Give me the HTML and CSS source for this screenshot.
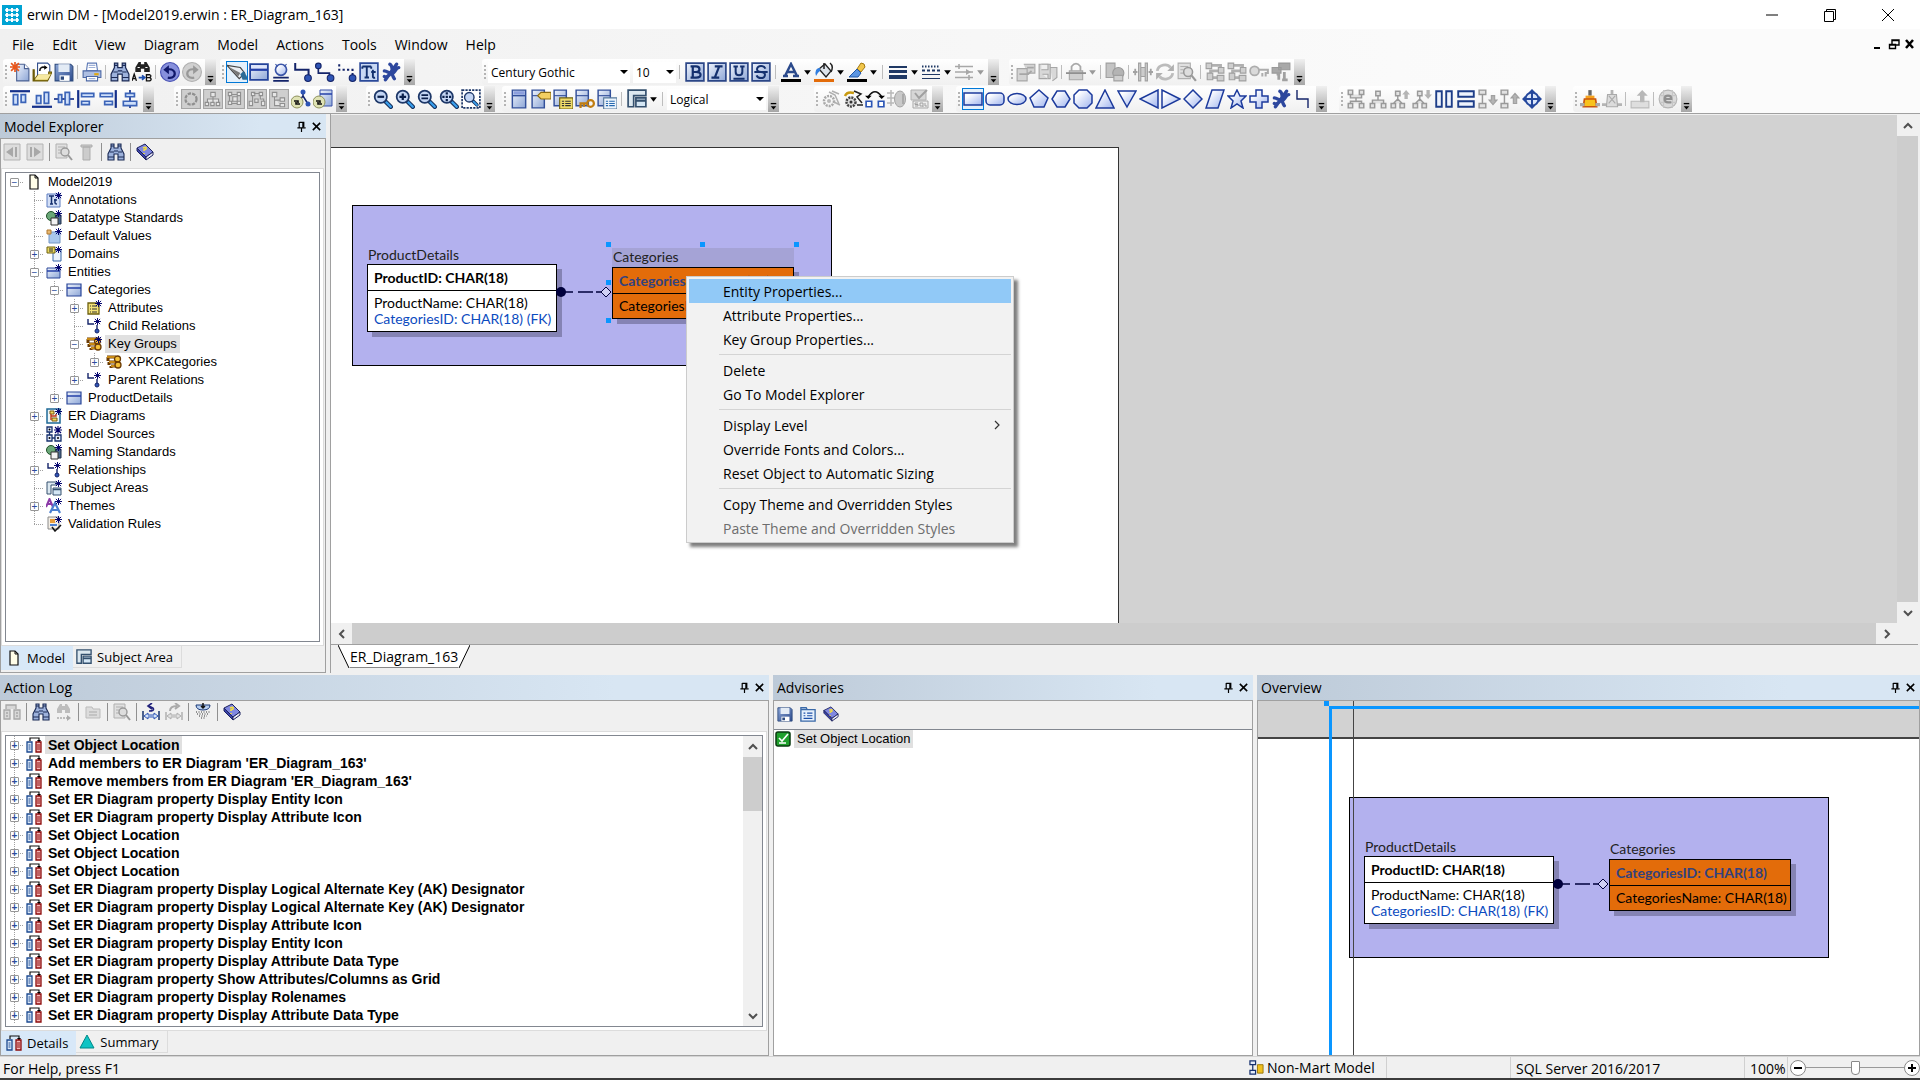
FILE: index.html
```html
<!DOCTYPE html>
<html lang="en">
<head>
    <meta charset="UTF-8">
    <meta name="viewport" content="width=device-width, initial-scale=1.0">
    <title>erwin DM - [Model2019.erwin : ER_Diagram_163]</title>
    <link rel="stylesheet" href="styles.css">
</head>
<body>
<svg class="sprite" aria-hidden="true">
    <defs>
        <linearGradient id="gb" x1="0" y1="0" x2="1" y2="1"><stop offset="0.2" stop-color="#fff"/><stop offset="1" stop-color="#9fb4ee"/></linearGradient>
        <linearGradient id="gk" x1="0" y1="0" x2="1" y2="1"><stop offset="0" stop-color="#8ea8d8"/><stop offset="1" stop-color="#2b4a8c"/></linearGradient>
        <linearGradient id="gt" x1="0" y1="0" x2="1" y2="1"><stop offset="0" stop-color="#eef3fc"/><stop offset="1" stop-color="#8da6d6"/></linearGradient>
    </defs>
    <!-- shared pieces -->
    <symbol id="spark" viewBox="0 0 8 8"><path d="M4 0v8M0 4h8M1 1l6 6M7 1L1 7" stroke="#00006b" stroke-width="1.1"/></symbol>
    <symbol id="table" viewBox="0 0 18 18"><path d="M1 2h16v14H1z" fill="url(#gt)" stroke="#24439a" stroke-width="1.6"/><path d="M2 3h14v3H2z" fill="#dfe6fb"/><path d="M1 7h16" stroke="#2440a8" stroke-width="2"/></symbol>
    <symbol id="binoc" viewBox="0 0 18 18"><path d="M4 1h3v4h4V1h3v4l3 6v6h-6v-6H7v6H1v-6l3-6z" fill="#9db2dc" stroke="#1b2a55" stroke-width="1.1"/><path d="M4 3h3M11 3h3M3 9h4M11 9h4M7 8h4M1 14h6M11 14h6" stroke="#1b2a55"/></symbol>
    <symbol id="lens" viewBox="0 0 18 18"><path d="M11 11l5 5" stroke="#17335f" stroke-width="4" stroke-linecap="round"/><path d="M12 12l4 4" stroke="#3aa0ee" stroke-width="2" stroke-linecap="round"/><circle cx="7" cy="7" r="5.5" fill="#c4d6f4" stroke="#1d3768" stroke-width="1.6"/></symbol>
    <symbol id="down" viewBox="0 0 8 8"><path d="M1 2h6L4 6z"/></symbol>
    <symbol id="more" viewBox="0 0 12 26"><path d="M3 18h6" stroke="#000" stroke-width="1.4"/><path d="M3 21h6l-3 3.500z"/></symbol>
    <symbol id="pin" viewBox="0 0 12 12"><path d="M3.500 1.500h5v5M3.500 1v6M7.500 1v6M1.500 7.500h9M6 8v4" fill="none" stroke="#000" stroke-width="1.3"/></symbol>
    <symbol id="close" viewBox="0 0 12 12"><path d="M2 2l8 8M10 2l-8 8" stroke="#000" stroke-width="1.7"/></symbol>

    <!-- file and edit -->
    <symbol id="new" viewBox="0 0 18 18"><path d="M6 2h7l4 4v11H6z" fill="url(#gt)" stroke="#4b6193"/><path d="M13 2v4h4" fill="#fff" stroke="#4b6193"/><path d="M4.500 0v9M0 4.500h9M1 1l7 7M8 1L1 8" stroke="#e8571c" stroke-width="1.5"/></symbol>
    <symbol id="open" viewBox="0 0 18 18"><path d="M5 1h9l2 2v9H5z" fill="#fff" stroke="#33508e"/><path d="M7 8c0-3 2-4 5-3" fill="none" stroke="#111" stroke-width="1.4"/><path d="M11 3l3 2-3 2z"/><path d="M1 7v10h13l4-8h-3v3H5l-3 4V7z" fill="#b39a1e" stroke="#6b5a08"/><path d="M3 15l3-4h11l-3 5H3z" fill="#f6e8a0"/></symbol>
    <symbol id="save" viewBox="0 0 18 18"><path d="M1 2h14l2 2v13H1z" fill="url(#gk)" stroke="#2d4a7d"/><path d="M4 2h10v7H4z" fill="#e3ebf5"/><path d="M5 12h9v5H5z" fill="#fff"/><path d="M6 13h3v3H6z" fill="#2d4a7d"/></symbol>
    <symbol id="print" viewBox="0 0 18 18"><path d="M5 1h8l1 7H4z" fill="#fff" stroke="#5d79b5"/><path d="M1 8h16v6H1z" fill="#aebfe2" stroke="#4d69a6"/><path d="M4 13h10v4H4z" fill="#fff" stroke="#4d69a6"/><path d="M11 11h4" stroke="#e0a813" stroke-width="2"/><path d="M6 3h6M6 5h6M6 15h6" stroke="#9fb1d8"/></symbol>
    <symbol id="replace" viewBox="0 0 18 18"><path d="M6 0h2v2h3V0h2l3 5v4h-5V6H8v3H3V5z" fill="#222"/><path d="M5 5h2M12 5h2" stroke="#fff"/><path d="M0 17l2-6 2 6M1 15h2M13 11.500h3q2 1 0 2.500h-3h3q2.500 1.500 0 3h-3z" fill="none" stroke="#111" stroke-width="1.2"/><path d="M6 14h5M9 12l2.500 2L9 16" fill="none" stroke="#1c4fb0" stroke-width="1.500"/></symbol>
    <symbol id="undo" viewBox="0 0 18 18"><circle cx="9" cy="9" r="8.500" fill="#8790dc" stroke="#4a53b4"/><path d="M7 14c5 1 7-2 6-5-1-2-4-3-7-2" fill="none" stroke="#10186a" stroke-width="2"/><path d="M3 7l5-4v8z" fill="#10186a"/></symbol>
    <symbol id="redo" viewBox="0 0 18 18"><circle cx="9" cy="9" r="8.500" fill="#d0d0d0" stroke="#b0b0b0"/><path d="M11 14c-5 1-7-2-6-5 1-2 4-3 7-2" fill="none" stroke="#989898" stroke-width="2"/><path d="M15 7l-5-4v8z" fill="#989898"/></symbol>

    <!-- drawing toolbox -->
    <symbol id="pointer" viewBox="0 0 18 18"><path d="M0 3l12 2 4 5-5 5z" fill="#e9edf2" stroke="#444"/><path d="M1 4l9 9 2-3z" fill="#777"/><path d="M12 11l3-3 3 5v3h-4z" fill="#2d6c97"/></symbol>
    <symbol id="subtype" viewBox="0 0 18 18"><circle cx="9" cy="7" r="5" fill="url(#gb)" stroke="#3a55a8" stroke-width="1.500"/><path d="M4 2l2 2M14 2l-2 2" stroke="#3a55a8"/><path d="M2 14h14M2 17h14" stroke="#14246a" stroke-width="1.600"/></symbol>
    <symbol id="rel" viewBox="0 0 18 18"><path d="M2 1v6h12v6" fill="none" stroke="#14246a" stroke-width="1.800"/><circle cx="13.500" cy="14.500" r="3" fill="#2f55b5" stroke="#14246a"/></symbol>
    <symbol id="relmany" viewBox="0 0 18 18"><path d="M3 4v6h10v4" fill="none" stroke="#14246a" stroke-width="1.500"/><circle cx="3" cy="3.500" r="2.500" fill="#2f55b5" stroke="#14246a"/><circle cx="14" cy="14.500" r="3" fill="#2f55b5" stroke="#14246a"/></symbol>
    <symbol id="reldash" viewBox="0 0 18 18"><path d="M2 2v5h12v6" fill="none" stroke="#14246a" stroke-width="1.800" stroke-dasharray="2 2"/><circle cx="14" cy="14.500" r="3" fill="#2f55b5" stroke="#14246a"/></symbol>
    <symbol id="textbox" viewBox="0 0 18 18"><path d="M1 1h16v16H1z" fill="#c8d8f4" stroke="#2b4a9a" stroke-width="1.500"/><path d="M3 4h8M7 4v10M5 14h4M3 4v2M11 4v2M12.500 7v6q0 1.500 2 1M11 9h4" fill="none" stroke="#12306e" stroke-width="1.700"/></symbol>
    <symbol id="brace" viewBox="0 0 18 18"><path d="M3 13c4 2 4-3 7-3s3-5 6-5M3 8c3 0 4 3 7 2M8 2c4 2 0 8 4 13M4 16L14 2" fill="none" stroke="#2d479e" stroke-width="3" stroke-linecap="round"/></symbol>

    <!-- font and line styles -->
    <symbol id="fb" viewBox="0 0 18 18"><path d="M1 1h16v16H1z" fill="url(#gt)" stroke="#2b4687" stroke-width="1.500"/><path d="M5 4h5q3 0 3 2.500T10 9q4 0 4 2.500T10 14H5M7 4v10M7 9h3" fill="none" stroke="#14306e" stroke-width="2"/></symbol>
    <symbol id="fi" viewBox="0 0 18 18"><path d="M1 1h16v16H1z" fill="url(#gt)" stroke="#2b4687" stroke-width="1.500"/><path d="M7 4h7M4 14h7M11 4L7 14" stroke="#14306e" stroke-width="2"/></symbol>
    <symbol id="fu" viewBox="0 0 18 18"><path d="M1 1h16v16H1z" fill="url(#gt)" stroke="#2b4687" stroke-width="1.500"/><path d="M4 4h4M10 4h4M6 4v5q0 3 3 3t3-3V4M4 15h10" fill="none" stroke="#14306e" stroke-width="1.800"/></symbol>
    <symbol id="fs" viewBox="0 0 18 18"><path d="M1 1h16v16H1z" fill="url(#gt)" stroke="#2b4687" stroke-width="1.500"/><path d="M13 6q-1-2.500-4-2.500T5.500 6 9 9t3.500 3T9 14.500 5 12M3 9h12" fill="none" stroke="#14306e" stroke-width="1.800"/></symbol>
    <symbol id="fcolor" viewBox="0 0 20 20"><path d="M4 14L10 2l6 12M6 10h8M2 14h5M12 14h6" fill="none" stroke="#2b4a8c" stroke-width="2.500"/><path d="M0 17h20v3H0z"/></symbol>
    <symbol id="fill" viewBox="0 0 20 20"><path d="M5 7l6-5 6 7-5 6z" fill="#dde3ea" stroke="#222" stroke-width="1.300"/><path d="M10 1v6M16 1q4 3 1 9" fill="none" stroke="#222" stroke-width="1.500"/><path d="M6 6q-6 0-4 8 2-4 4-5z" fill="#2f7de0"/><path d="M0 17h20v3H0z" fill="#e36c0a"/></symbol>
    <symbol id="brush" viewBox="0 0 20 20"><path d="M14 1q4 0 4 4l-4 5-4-3z" fill="#f1c64b" stroke="#a47a12"/><path d="M10 7l4 4-3 4H2l5-5z" fill="#5b95e2" stroke="#1f56a8"/><path d="M0 17h20v3H0z"/></symbol>
    <symbol id="weight" viewBox="0 0 20 20"><path d="M1 5h18" stroke="#1f3864" stroke-width="2"/><path d="M1 9.500h18" stroke="#1f3864" stroke-width="3"/><path d="M1 15h18" stroke="#1f3864" stroke-width="4"/></symbol>
    <symbol id="dash" viewBox="0 0 20 20"><path d="M1 4.500h18" stroke="#1f3864" stroke-width="2" stroke-dasharray="1.500 1.500"/><path d="M1 8.500h18" stroke="#1f3864" stroke-width="2" stroke-dasharray="3 2"/><path d="M1 12.500h18M1 16.500h18" stroke="#1f3864"/></symbol>
    <symbol id="arrows" viewBox="0 0 20 20"><path d="M1 4.500h18M1 10h18M1 15.500h18M5 2v5M15 13v5" stroke="#a8a8a8" stroke-width="1.600"/><path d="M12 7l5 3-5 3z" fill="#a8a8a8"/></symbol>

    <!-- disabled tools -->
    <symbol id="d-folder" viewBox="0 0 18 18"><path d="M1 6h9v11H1zM7 2h10v8H10" fill="#d4d4d4" stroke="#a6a6a6"/><path d="M10 5h6M3 11h8l3-3" fill="none" stroke="#a6a6a6" stroke-width="1.600"/></symbol>
    <symbol id="d-save" viewBox="0 0 18 18"><path d="M1 2h10v13H1zM11 5h6v9l-4 3" fill="#d8d8d8" stroke="#a6a6a6"/><path d="M3 2h6v5H3M4 11h5v4" fill="#f0f0f0" stroke="#a6a6a6"/></symbol>
    <symbol id="d-lock" viewBox="0 0 18 18"><path d="M5 8V4q4-5 8 0v4" fill="none" stroke="#a8a8a8" stroke-width="1.600"/><path d="M3 8h12v8H3z" fill="#cfcfcf" stroke="#a8a8a8"/><path d="M0 10h18" stroke="#909090" stroke-width="1.600"/></symbol>
    <symbol id="d-cube" viewBox="0 0 18 18"><path d="M1 1h8v13H1z" fill="#c4c4c4" stroke="#a0a0a0"/><circle cx="12" cy="10" r="5" fill="#b4b4b4" stroke="#999"/><path d="M8 12h8v5H8z" fill="#cfcfcf" stroke="#a0a0a0"/></symbol>
    <symbol id="d-width" viewBox="0 0 18 18"><path d="M5 1h2v16H5zM11 1h2v16h-2zM7 5h4v8H7z" fill="#ccc" stroke="#a2a2a2"/><path d="M0 9h4M14 9h4M2 6v6M16 6v6" stroke="#a2a2a2" stroke-width="1.600"/></symbol>
    <symbol id="d-sync" viewBox="0 0 18 18"><path d="M2 8c1-6 9-7 12-3M16 10c-1 6-9 7-12 3" fill="none" stroke="#bcbcbc" stroke-width="2.500"/><path d="M17 2v6h-6zM1 16v-6h6z" fill="#b0b0b0"/></symbol>
    <symbol id="d-find" viewBox="0 0 18 18"><path d="M1 1h11v14H1z" fill="#e0e0e0" stroke="#b0b0b0"/><path d="M3 4h7M3 7h3M3 10h3" stroke="#b0b0b0"/><circle cx="10" cy="9" r="4" fill="#ddd" stroke="#999" stroke-width="1.400"/><path d="M13 12l4 5" stroke="#999" stroke-width="2"/></symbol>
    <symbol id="d-flow" viewBox="0 0 18 18"><path d="M3 3h11v5H5v6h9" fill="none" stroke="#b0b0b0" stroke-width="2.500"/><path d="M1 1h5v5H1zM12 5h5v5h-5zM2 10h5v6H2zM11 12h6v5h-6z" fill="#cfcfcf" stroke="#a0a0a0"/></symbol>
    <symbol id="d-key" viewBox="0 0 18 18"><circle cx="5" cy="8" r="4" fill="#dadada" stroke="#adadad" stroke-width="1.600"/><path d="M9 7h8v3h-2v3M12 10v3" fill="none" stroke="#adadad" stroke-width="1.800"/></symbol>
    <symbol id="d-swap" viewBox="0 0 18 18"><path d="M7 1h10v6H7zM1 5h8v5H1z" fill="#a8a8a8" stroke="#989898"/><path d="M5 11h2v5M12 9v6M10 16h5" stroke="#a0a0a0" stroke-width="2.500" fill="none"/></symbol>
    <symbol id="d-gear" viewBox="0 0 20 20"><circle cx="8" cy="12" r="5" fill="none" stroke="#a8a8a8" stroke-width="2.500" stroke-dasharray="2 1"/><circle cx="8" cy="12" r="2" fill="#b8b8b8"/><path d="M8 3l6 3 4 9M11 2l7 3M13 13l6 3" fill="none" stroke="#b0b0b0" stroke-width="1.500"/></symbol>
    <symbol id="gear" viewBox="0 0 20 20"><circle cx="8" cy="13" r="4.500" fill="#ddd" stroke="#444" stroke-width="2.500" stroke-dasharray="2 1"/><circle cx="8" cy="13" r="1.500" fill="#333"/><path d="M2 7q2-5 9-3" fill="none" stroke="#c89a10" stroke-width="2.500"/><path d="M11 2l7 3-4 3 5 6M14 16h6" fill="none" stroke="#222" stroke-width="1.500"/></symbol>
    <symbol id="swap" viewBox="0 0 18 18"><path d="M3 7q6-9 12 0" fill="none" stroke="#111" stroke-width="1.500"/><path d="M0 6h6l-3 3zM12 6h6l-3 3z"/><path d="M1 11h5v5H1zM12 11h5v5h-5z" fill="#fff" stroke="#2b55b5" stroke-width="1.500"/></symbol>
    <symbol id="d-db" viewBox="0 0 20 20"><path d="M0 4h7M0 9h8M0 14h7M4 1v16" stroke="#b8b8b8" stroke-width="1.500"/><ellipse cx="13" cy="10" rx="5.500" ry="8" fill="#c9c9c9" stroke="#a4a4a4"/><path d="M16 5v10" stroke="#aaa" stroke-width="2"/></symbol>
    <symbol id="d-sql" viewBox="0 0 20 20"><path d="M2 1h15v10H2z" fill="#d6d6d6" stroke="#b0b0b0"/><path d="M6 4l4 5 8-8" fill="none" stroke="#a0a0a0" stroke-width="2"/><path d="M4 12h15v7H4z" fill="#eee" stroke="#a8a8a8"/><path d="M9 14H6v1.500h3V17H6M14 17h-3v-3h3v4M16 14v3h2" fill="none" stroke="#a0a0a0"/></symbol>

    <!-- alignment -->
    <symbol id="a-top" viewBox="0 0 18 18"><path d="M0 2h18" stroke="#15308a" stroke-width="2"/><path d="M3 5h4v9H3zM10 5h4v7h-4z" fill="#cfe0fb" stroke="#3c64b8" stroke-width="1.500"/></symbol>
    <symbol id="a-bot" viewBox="0 0 18 18"><path d="M0 16h18" stroke="#15308a" stroke-width="2"/><path d="M4 6h4v7H4zM11 3h4v10h-4z" fill="#cfe0fb" stroke="#3c64b8" stroke-width="1.500"/></symbol>
    <symbol id="a-mid" viewBox="0 0 18 18"><path d="M0 9h18" stroke="#15308a" stroke-width="1.500"/><path d="M4 5h3v7H4zM10 3h4v11h-4z" fill="#cfe0fb" stroke="#3c64b8" stroke-width="1.500"/></symbol>
    <symbol id="a-left" viewBox="0 0 18 18"><path d="M2 1v16" stroke="#15308a" stroke-width="2"/><path d="M5 4h11v3H5zM5 11h7v3H5z" fill="#cfe0fb" stroke="#3c64b8" stroke-width="1.500"/></symbol>
    <symbol id="a-right" viewBox="0 0 18 18"><path d="M16 1v16" stroke="#15308a" stroke-width="2"/><path d="M2 4h11v3H2zM6 11h7v3H6z" fill="#cfe0fb" stroke="#3c64b8" stroke-width="1.500"/></symbol>
    <symbol id="a-center" viewBox="0 0 18 18"><path d="M9 1v16" stroke="#15308a" stroke-width="1.500"/><path d="M5 4h8v3H5zM3 11h12v4H3z" fill="#cfe0fb" stroke="#3c64b8" stroke-width="1.500"/></symbol>

    <!-- layouts -->
    <symbol id="l-circle" viewBox="0 0 18 18"><path d="M0 0h18v18H0z" fill="#cfcfcf" stroke="#a5a5a5" stroke-width="2"/><circle cx="9" cy="9" r="5" fill="none" stroke="#8f8f8f" stroke-width="2" stroke-dasharray="3 1"/></symbol>
    <symbol id="l-tree" viewBox="0 0 18 18"><path d="M0 0h18v18H0z" fill="#cfcfcf" stroke="#a5a5a5" stroke-width="2"/><path d="M7 3h4v4H7zM9 7v5M4 12V9h10v3M2 12h3v3H2zM7 12h3v3H7zM12 12h3v3h-3z" fill="#e6e6e6" stroke="#8f8f8f"/></symbol>
    <symbol id="l-grid" viewBox="0 0 18 18"><path d="M0 0h18v18H0z" fill="#cfcfcf" stroke="#a5a5a5" stroke-width="2"/><path d="M3 3h3v3H3zM11 3h3v3h-3zM3 11h3v3H3zM11 11h3v3h-3zM7 7h4v4H7zM6 5h5M4 6v5M14 6v5M6 13h5" fill="#e6e6e6" stroke="#8f8f8f"/></symbol>
    <symbol id="l-org" viewBox="0 0 18 18"><path d="M0 0h18v18H0z" fill="#cfcfcf" stroke="#a5a5a5" stroke-width="2"/><path d="M4 3h3v3H4zM11 3h3v3h-3zM2 11h3v4H2zM7 9h3v3H7zM13 11h3v4h-3zM5 6v5M12 6v3h3v2M6 4h5" fill="#e6e6e6" stroke="#8f8f8f"/></symbol>
    <symbol id="l-list" viewBox="0 0 18 18"><path d="M0 0h18v18H0z" fill="#cfcfcf" stroke="#a5a5a5" stroke-width="2"/><path d="M3 3h4v4H3zM5 7v8h5M5 10h5M10 8h4v3h-4zM10 13h4v3h-4z" fill="#e6e6e6" stroke="#8f8f8f"/></symbol>
    <symbol id="redraw" viewBox="0 0 20 20"><path d="M12 3v4l5 8M12 7l-4 5" fill="none" stroke="#14246a" stroke-width="1.500"/><circle cx="12" cy="3" r="2.500" fill="#2f55b5"/><circle cx="17" cy="15" r="2.500" fill="#2f55b5"/><circle cx="6" cy="13" r="6" fill="#dfe2b4" stroke="#8e915c"/><path d="M3 12h4v2M9 15H5v-2" fill="none" stroke="#111" stroke-width="1.600"/></symbol>
    <symbol id="redraw2" viewBox="0 0 20 20"><path d="M7 1h12v16H7z" fill="url(#gt)" stroke="#3850a8"/><path d="M7 5h12" stroke="#2440a8" stroke-width="1.500"/><circle cx="6" cy="13" r="6" fill="#dfe2b4" stroke="#8e915c"/><path d="M3 12h4v2M9 15H5v-2" fill="none" stroke="#111" stroke-width="1.600"/></symbol>

    <!-- zoom -->
    <symbol id="z-out" viewBox="0 0 18 18"><use href="#lens"/><path d="M4 7h6" stroke="#0a1f4a" stroke-width="2"/></symbol>
    <symbol id="z-in" viewBox="0 0 18 18"><use href="#lens"/><path d="M4 7h6M7 4v6" stroke="#0a1f4a" stroke-width="2"/></symbol>
    <symbol id="z-norm" viewBox="0 0 18 18"><use href="#lens"/><path d="M4 5.500h6M4 8.500h6" stroke="#0a1f4a" stroke-width="1.500"/></symbol>
    <symbol id="z-fit" viewBox="0 0 18 18"><use href="#lens"/><path d="M3 7h8M7 3v8" stroke="#0a1f4a" stroke-width="2" stroke-dasharray="2 1"/></symbol>
    <symbol id="z-sel" viewBox="0 0 18 18"><path d="M1 1h16v16H1z" fill="#fff" stroke="#1d3768" stroke-width="1.500" stroke-dasharray="2 1"/><use href="#lens" x="2" y="2" width="14" height="14"/></symbol>

    <!-- display levels -->
    <symbol id="v-ent" viewBox="0 0 18 18"><path d="M3 1h12v16H3z" fill="url(#gt)" stroke="#33509a" stroke-width="1.300"/><path d="M4 2h10v3H4z" fill="#8c9fdd"/><path d="M3 6h12" stroke="#33509a" stroke-width="1.300"/></symbol>
    <symbol id="v-tag" viewBox="0 0 18 18"><path d="M1 1h11v16H1z" fill="url(#gt)" stroke="#33509a" stroke-width="1.300"/><path d="M1 6h11" stroke="#33509a"/><path d="M6 6l3-3h9v6H9z" fill="#f2cf62" stroke="#8a6a10"/></symbol>
    <symbol id="v-attr" viewBox="0 0 18 18"><path d="M1 1h11v14H1z" fill="url(#gt)" stroke="#33509a" stroke-width="1.300"/><path d="M1 6h11" stroke="#33509a"/><path d="M6 8h12v10H6z" fill="#f0dc6a" stroke="#6e6010"/><path d="M8 11h2M11 11h5M8 13h2M11 13h5M8 15h2M11 15h5" stroke="#333"/></symbol>
    <symbol id="v-key" viewBox="0 0 18 18"><path d="M1 1h11v14H1z" fill="url(#gt)" stroke="#33509a" stroke-width="1.300"/><path d="M1 6h11" stroke="#33509a"/><circle cx="14" cy="13" r="3" fill="none" stroke="#c07c10" stroke-width="2"/><path d="M11 13H5v4M8 13v3" fill="none" stroke="#c07c10" stroke-width="2"/></symbol>
    <symbol id="v-def" viewBox="0 0 18 18"><path d="M1 1h11v14H1z" fill="url(#gt)" stroke="#33509a" stroke-width="1.300"/><path d="M1 6h11" stroke="#33509a"/><path d="M6 8h12v10H6z" fill="#eaf3fb" stroke="#54789c"/><path d="M8 11h2M11 11h5M8 13h2M11 13h5M8 15h2M11 15h5" stroke="#2468b0"/></symbol>
    <symbol id="area" viewBox="0 0 18 18"><path d="M1 1h16v5H6v10H1z" fill="#dce8f0" stroke="#34506e" stroke-width="1.500"/><path d="M8 8h9v8H8z" fill="#d4e6f4" stroke="#34506e" stroke-width="1.500"/><path d="M8 10.500h9" stroke="#34506e" stroke-width="2"/></symbol>

    <!-- shapes -->
    <symbol id="s-rect" viewBox="0 0 20 20"><path d="M1 4h18v12H1z" fill="url(#gb)" stroke="#1c3a9c" stroke-width="1.500"/></symbol>
    <symbol id="s-round" viewBox="0 0 20 20"><rect x="1" y="4" width="18" height="12" rx="4" fill="url(#gb)" stroke="#1c3a9c" stroke-width="1.500"/></symbol>
    <symbol id="s-oval" viewBox="0 0 20 20"><ellipse cx="10" cy="10" rx="9" ry="5.500" fill="url(#gb)" stroke="#1c3a9c" stroke-width="1.500"/></symbol>
    <symbol id="s-pent" viewBox="0 0 20 20"><path d="M10 1l9 8-4 9H5L1 9z" fill="url(#gb)" stroke="#1c3a9c" stroke-width="1.500"/></symbol>
    <symbol id="s-hex" viewBox="0 0 20 20"><path d="M6 2h8l5 8-5 8H6l-5-8z" fill="url(#gb)" stroke="#1c3a9c" stroke-width="1.500"/></symbol>
    <symbol id="s-oct" viewBox="0 0 20 20"><path d="M6 1h8l5 5v8l-5 5H6l-5-5V6z" fill="url(#gb)" stroke="#1c3a9c" stroke-width="1.500"/></symbol>
    <symbol id="s-up" viewBox="0 0 20 20"><path d="M10 1l9 18H1z" fill="url(#gb)" stroke="#1c3a9c" stroke-width="1.500"/></symbol>
    <symbol id="s-down" viewBox="0 0 20 20"><path d="M10 18l9-16H1z" fill="url(#gb)" stroke="#1c3a9c" stroke-width="1.500"/></symbol>
    <symbol id="s-left" viewBox="0 0 20 20"><path d="M1 10l18-9v18z" fill="url(#gb)" stroke="#1c3a9c" stroke-width="1.500"/></symbol>
    <symbol id="s-right" viewBox="0 0 20 20"><path d="M19 10L1 1v18z" fill="url(#gb)" stroke="#1c3a9c" stroke-width="1.500"/></symbol>
    <symbol id="s-dia" viewBox="0 0 20 20"><path d="M10 1l9 9-9 9-9-9z" fill="url(#gb)" stroke="#1c3a9c" stroke-width="1.500"/></symbol>
    <symbol id="s-para" viewBox="0 0 20 20"><path d="M7 1h12l-6 18H1z" fill="url(#gb)" stroke="#1c3a9c" stroke-width="1.500"/></symbol>
    <symbol id="s-star" viewBox="0 0 20 20"><path d="M10 1l3 6h6l-5 5 2 7-6-4-6 4 2-7-5-5h6z" fill="url(#gb)" stroke="#1c3a9c" stroke-width="1.500"/></symbol>
    <symbol id="s-plus" viewBox="0 0 20 20"><path d="M7 1h6v6h6v6h-6v6H7v-6H1V7h6z" fill="url(#gb)" stroke="#1c3a9c" stroke-width="1.500"/></symbol>
    <symbol id="s-step" viewBox="0 0 20 20"><path d="M4 1v9h11v9" fill="none" stroke="#14246a" stroke-width="1.400"/></symbol>

    <!-- hierarchy -->
    <symbol id="h-x" viewBox="0 0 18 18"><path d="M2 1h4v4H2zM12 1h4v4h-4zM2 13h4v4H2zM12 13h4v4h-4zM4 5v3h10V5M9 8v3M4 13v-2h10v2" fill="#e2e2e2" stroke="#999" stroke-width="1.300"/></symbol>
    <symbol id="h-tree" viewBox="0 0 18 18"><path d="M7 2h4v4H7zM2 13h4v4H2zM12 13h4v4h-4zM9 6v4M4 13v-3h10v3" fill="#e2e2e2" stroke="#999" stroke-width="1.300"/></symbol>
    <symbol id="h-up" viewBox="0 0 18 18"><path d="M5 2h4v4H5zM1 13h4v4H1zM9 13h4v4H9zM7 6v4M3 13l4-4 4 4" fill="#e2e2e2" stroke="#999" stroke-width="1.300"/><path d="M11 5l3.500-4L18 5h-2v4h-3V5z" fill="#b4b4b4"/></symbol>
    <symbol id="h-down" viewBox="0 0 18 18"><path d="M5 2h4v4H5zM1 13h4v4H1zM9 13h4v4H9zM7 6v4M3 13l4-4 4 4" fill="#e2e2e2" stroke="#999" stroke-width="1.300"/><path d="M11 5l3.500 4L18 5h-2V1h-3v4z" fill="#b4b4b4"/></symbol>
    <symbol id="h-cols" viewBox="0 0 18 18"><path d="M2 2h5v14H2zM11 2h5v14h-5z" fill="#eef3fd" stroke="#1d3d88" stroke-width="1.700"/></symbol>
    <symbol id="h-rows" viewBox="0 0 18 18"><path d="M2 2h14v5H2zM2 11h14v5H2z" fill="#eef3fd" stroke="#1d3d88" stroke-width="1.700"/></symbol>
    <symbol id="h-exp" viewBox="0 0 18 18"><path d="M1 1h6v4H1zM1 13h6v4H1zM4 5v8" fill="#e2e2e2" stroke="#999" stroke-width="1.300"/><path d="M10 10l3.500 4 3.500-4h-2V6h-3v4z" fill="#b4b4b4" stroke="#a0a0a0"/></symbol>
    <symbol id="h-col" viewBox="0 0 18 18"><path d="M1 1h6v4H1zM1 13h6v4H1zM4 5v8" fill="#e2e2e2" stroke="#999" stroke-width="1.300"/><path d="M10 8l3.500-4L17 8h-2v5h-3V8z" fill="#b4b4b4" stroke="#a0a0a0"/></symbol>
    <symbol id="target" viewBox="0 0 20 20"><circle cx="10" cy="10" r="6.500" fill="#dbe6fa" stroke="#24479c" stroke-width="2"/><path d="M10 1v18M1 10h18" stroke="#24479c" stroke-width="2"/><path d="M10 0l3 3H7zM10 20l3-3H7zM0 10l3-3v6zM20 10l-3-3v6z" fill="#24479c"/></symbol>
    <symbol id="mart" viewBox="0 0 18 18"><path d="M9 1v5" stroke="#666" stroke-width="3"/><path d="M5 6h8v3H5z" fill="#f6a21c"/><path d="M4 9h10l1 7H3z" fill="#f8c21c" stroke="#c8540c" stroke-width="1.500"/><path d="M0 14h4M14 14h4" stroke="#aaa" stroke-width="3"/></symbol>
    <symbol id="d-mart" viewBox="0 0 18 18"><path d="M9 1v4M0 14h18" stroke="#b4b4b4" stroke-width="2.500"/><path d="M5 5h8l1 11H4z" fill="#dcdcdc" stroke="#aaa"/><path d="M6 6l6 7M12 6l-6 7" stroke="#aaa"/></symbol>
    <symbol id="d-up" viewBox="0 0 18 18"><path d="M1 11h16v6H1z" fill="#dedede" stroke="#bbb"/><path d="M6 6l5-5 5 5h-3v6H9V6z" fill="#b8b8b8"/></symbol>
    <symbol id="d-globe" viewBox="0 0 18 18"><circle cx="9" cy="9" r="8" fill="#dadada" stroke="#b4b4b4"/><path d="M1 6h16M1 12h16M5 1v16M13 1v16" stroke="#c6c6c6"/><path d="M6 9h6q0-3-3-3T6 9t3 3h3" fill="none" stroke="#909090" stroke-width="2"/></symbol>

    <!-- panel tools -->
    <symbol id="p-prev" viewBox="0 0 18 18"><path d="M1 1h16v16H1z" fill="#ddd" stroke="#b4b4b4"/><path d="M10 4v10L3 9zM12 4h2v10h-2z" fill="#a8a8a8"/></symbol>
    <symbol id="p-next" viewBox="0 0 18 18"><path d="M1 1h16v16H1z" fill="#ddd" stroke="#b4b4b4"/><path d="M8 4v10l7-5zM4 4h2v10H4z" fill="#a8a8a8"/></symbol>
    <symbol id="p-del" viewBox="0 0 18 18"><path d="M3 2h11v2H3zM5 4h7v13H5z" fill="#ccc" stroke="#adadad"/></symbol>
    <symbol id="help" viewBox="0 0 18 18"><path d="M1 5l8-4 8 8-7 5z" fill="#8088e0" stroke="#1c2260"/><path d="M1 5v3l9 9v-3z" fill="#3a42a8" stroke="#1c2260"/><path d="M10 14l7-5v3l-7 5z" fill="#f0f0f8" stroke="#1c2260"/><path d="M7 5q4-2 3 1l-2 1v1M8 10v1" fill="none" stroke="#f6e03c" stroke-width="1.600"/></symbol>
    <symbol id="p-card" viewBox="0 0 18 18"><path d="M2 4h6l1 2h7v9H2z" fill="#dcdcdc" stroke="#bbb"/><path d="M5 9h8M5 12h8" stroke="#aaa"/></symbol>
    <symbol id="d-log" viewBox="0 0 18 18"><path d="M1 7h6v9H1zM11 7h6v9h-6zM3 6V2h10v4M3 10h2M3 13h2M13 10h2M13 13h2" fill="#d8d8d8" stroke="#a8a8a8" stroke-width="1.300"/></symbol>
    <symbol id="d-next" viewBox="0 0 18 18"><path d="M5 1h2v2h3V1h2l3 5v4h-5V7H7v3H2V6z" fill="#bdbdbd"/><path d="M2 15h12" stroke="#aaa" stroke-width="1.500" stroke-dasharray="2 1"/><path d="M12 12l4 3-4 3z" fill="#aaa"/></symbol>
    <symbol id="undo2" viewBox="0 0 18 18"><path d="M7 8q6 0 4-3L7 3M10 0L6 3l4 3" fill="none" stroke="#22227c" stroke-width="1.600"/><path d="M1 8v9M17 8v9" stroke="#16306e" stroke-width="1.500"/><path d="M2 13l4-3v2h6v-2l4 3-4 3v-2H6v2z" fill="#d4e2f8" stroke="#2f55b5"/></symbol>
    <symbol id="redo2" viewBox="0 0 18 18"><path d="M5 8q0-5 7-5M10 0l4 3-4 3" fill="none" stroke="#aaa" stroke-width="2"/><path d="M1 9v8M17 9v8" stroke="#b0b0b0" stroke-width="1.500"/><path d="M2 13l4-3v2h6v-2l4 3-4 3v-2H6v2z" fill="#e0e0e0" stroke="#b0b0b0"/></symbol>
    <symbol id="filter" viewBox="0 0 18 18"><path d="M2 2h14q0 5-7 5T2 2z" fill="#b8cff0" stroke="#1b3a78"/><path d="M9 0v5M7 3l2 2 2-2" fill="none" stroke="#111" stroke-width="1.500"/><path d="M2 9h14M3 11h12M5 13h8M7 15h4" stroke="#333" stroke-dasharray="1 1.500"/></symbol>
    <symbol id="details" viewBox="0 0 18 18"><path d="M1 4h16v13H1V2h6l1 2" fill="#e6f0fc" stroke="#3a69a8" stroke-width="1.500"/><path d="M4 8h2M8 8h6M4 11h2M8 11h6M4 14h10" stroke="#1d4fa8" stroke-width="1.300"/></symbol>

    <!-- tree items -->
    <symbol id="t-doc" viewBox="0 0 16 16"><path d="M4 1h5l3 3v11H4z" fill="#fffde8" stroke="#111" stroke-width="1.200"/><path d="M9 1v3h3" fill="none" stroke="#111"/></symbol>
    <symbol id="t-text" viewBox="0 0 16 16"><path d="M1 2h13v13H1z" fill="#d3dff6" stroke="#5c7cc0"/><path d="M3 4h5M5.500 4v8M4 12h3M9 7v4q0 1 2 1M8 8h3" fill="none" stroke="#16306e" stroke-width="1.500"/><use href="#spark" x="9" y="0" width="7" height="7"/></symbol>
    <symbol id="t-std" viewBox="0 0 16 16"><circle cx="5" cy="6" r="4.500" fill="#6aa878" stroke="#1f4f28"/><path d="M10 5h5v9h-5z" fill="#4d6a8e" stroke="#1f2f48"/><path d="M5 8h7v7H5z" fill="#f3f3f3" stroke="#333"/><use href="#spark" x="9" y="0" width="7" height="7"/></symbol>
    <symbol id="t-def" viewBox="0 0 16 16"><path d="M3 4h11v11H3z" fill="#a9c6ec" stroke="#7396c4"/><path d="M1 2h4v4H1z" fill="#e8b870" stroke="#b07830"/><use href="#spark" x="9" y="0" width="7" height="7"/></symbol>
    <symbol id="t-dom" viewBox="0 0 16 16"><path d="M7 4h8v11H7z" fill="#eaf2fb" stroke="#3a69a8"/><path d="M1 1h8v6H1z" fill="#e8d860" stroke="#6e6010"/><path d="M3 3h4M3 5h4" stroke="#333"/><use href="#spark" x="9" y="0" width="7" height="7"/></symbol>
    <symbol id="t-ents" viewBox="0 0 16 16"><path d="M1 4h13v10H1z" fill="url(#gt)" stroke="#2a4698"/><path d="M1 7h13" stroke="#2440a8" stroke-width="1.500"/><use href="#spark" x="9" y="0" width="7" height="7"/></symbol>
    <symbol id="t-ent" viewBox="0 0 16 16"><path d="M1 2h14v12H1z" fill="url(#gt)" stroke="#2a4698" stroke-width="1.200"/><path d="M1 6h14" stroke="#2440a8" stroke-width="1.500"/></symbol>
    <symbol id="t-attr" viewBox="0 0 16 16"><path d="M2 3h11v11H2z" fill="#f3e27a" stroke="#6e6010" stroke-width="1.300"/><path d="M4 6h1M6 6h5M4 9h1M6 9h5M4 12h1M6 12h5" stroke="#333"/><use href="#spark" x="9" y="0" width="7" height="7"/></symbol>
    <symbol id="t-rel" viewBox="0 0 16 16"><path d="M2 1v5h6M11 7v5" fill="none" stroke="#14246a" stroke-width="1.400"/><circle cx="11" cy="13" r="2" fill="#2f55b5" stroke="#14246a"/><use href="#spark" x="8" y="0" width="7" height="7"/></symbol>
    <symbol id="t-key" viewBox="0 0 16 16"><path d="M1 3h9M2 3v4M3 8h7M5 12h7M5 12v2M3 8v3" fill="none" stroke="#6b3b04" stroke-width="3"/><path d="M1 3h9M3 8h7M5 12h7" stroke="#e8a418" stroke-width="1.300"/><circle cx="11.500" cy="5" r="3" fill="#f4c038" stroke="#6b3b04" stroke-width="1.300"/><circle cx="12" cy="11" r="3" fill="#f4c038" stroke="#6b3b04" stroke-width="1.300"/></symbol>
    <symbol id="t-keys" viewBox="0 0 16 16"><use href="#t-key"/><use href="#spark" x="9" y="0" width="7" height="7"/></symbol>
    <symbol id="t-er" viewBox="0 0 16 16"><path d="M1 1h13v14H1z" fill="#eef6f8" stroke="#1f6a96" stroke-width="1.500"/><path d="M4 3h4v3H4zM6 10h5v3H6z" fill="#f0d860" stroke="#7a5a10"/><path d="M5 6v6M5 8h5v-2" fill="none" stroke="#c03818" stroke-width="1.400"/><use href="#spark" x="9" y="0" width="7" height="7"/></symbol>
    <symbol id="t-src" viewBox="0 0 16 16"><path d="M1 1h5v5H1zM1 9h5v6H1zM9 9h6v6H9zM3.500 6v3M6 12h3" fill="#e4ecfa" stroke="#16306e" stroke-width="1.300"/><circle cx="3.500" cy="3.500" r="1"/><circle cx="3.500" cy="12" r="1"/><circle cx="12" cy="12" r="1"/><use href="#spark" x="8" y="0" width="8" height="8"/></symbol>
    <symbol id="t-area" viewBox="0 0 16 16"><path d="M1 2h10v3H5v9H1z" fill="#dce8f0" stroke="#34506e"/><path d="M7 8h8v7H7z" fill="#d4e6f4" stroke="#34506e"/><path d="M7 9.500h8" stroke="#34506e" stroke-width="1.500"/><use href="#spark" x="9" y="0" width="7" height="7"/></symbol>
    <symbol id="t-theme" viewBox="0 0 16 16"><path d="M0 9L3.500 1 7 9M1 6h5" fill="none" stroke="#8c3aa8" stroke-width="2"/><path d="M4 15l5-10 5 10M6 12h7" fill="none" stroke="#4c80d0" stroke-width="2.200"/><use href="#spark" x="9" y="0" width="7" height="7"/></symbol>
    <symbol id="t-val" viewBox="0 0 16 16"><path d="M2 1h11v12H2z" fill="#f4efe6" stroke="#8a8a8a"/><path d="M4 3h5v4H4z" fill="#e89c38"/><path d="M4 9h7" stroke="#4c80d0" stroke-width="2"/><path d="M6 11l3 4 6-6" fill="none" stroke="#111" stroke-width="1.500"/><use href="#spark" x="9" y="0" width="7" height="7"/></symbol>
    <symbol id="t-log" viewBox="0 0 16 16"><path d="M4 4V1h9v3" fill="none" stroke="#111" stroke-width="1.200"/><path d="M11 3h4l-2 3z"/><path d="M1 5h5v10H1z" fill="#dbe9fa" stroke="#1c4a90" stroke-width="1.300"/><path d="M10 5h5v10h-5z" fill="#f6b8b8" stroke="#8c0c0c" stroke-width="1.300"/><path d="M2.500 8h2M2.500 10h2M2.500 12h2" stroke="#1c4a90"/><path d="M11 8h3M11 10h3M11 12h3" stroke="#8c0c0c"/></symbol>
    <symbol id="t-ok" viewBox="0 0 16 16"><rect x="1" y="1" width="14" height="14" rx="2" fill="#1fa02c" stroke="#0a3a10" stroke-width="1.500"/><path d="M4 7l3 3 6-7M4 12h7" fill="none" stroke="#fff" stroke-width="1.600"/></symbol>
    <symbol id="t-sum" viewBox="0 0 16 16"><path d="M8 1l7 13H1z" fill="#10c4c4" stroke="#088"/></symbol>
    <symbol id="nomart" viewBox="0 0 16 16"><path d="M1 1h6v4H1zM1 11h6v4H1zM4 5v6" fill="#e4ecfa" stroke="#16306e" stroke-width="1.300"/><path d="M9 5h6v9H9z" fill="#f0c020" stroke="#9a7608"/></symbol>
</svg>

<header class="title-bar">
    <svg class="logo" viewBox="0 0 20 20"><path d="M0 0h20v20H0z" fill="#00a3d3"/><path d="M3 5h14M3 10h14M3 15h14" stroke="#fff" stroke-width="1.500"/><path d="M5 3v4M10 3v4M15 3v4M5 8v4M10 8v4M15 8v4M5 13v4M10 13v4M15 13v4" stroke="#fff" stroke-width="2"/></svg>
    <h1>erwin DM - [Model2019.erwin : ER_Diagram_163]</h1>
    <div class="window-buttons">
        <button aria-label="Minimize"><svg viewBox="0 0 14 14"><path d="M1 7h12" stroke="#000"/></svg></button>
        <button aria-label="Restore"><svg viewBox="0 0 14 14"><path d="M1.500 3.500h9v10h-9zM3.500 3.500v-2h9v10h-2" fill="none" stroke="#000"/></svg></button>
        <button aria-label="Close"><svg viewBox="0 0 14 14"><path d="M1 1l12 12M13 1L1 13" stroke="#000"/></svg></button>
    </div>
</header>

<nav class="menu-bar">
    <button>File</button><button>Edit</button><button>View</button><button>Diagram</button><button>Model</button><button>Actions</button><button>Tools</button><button>Window</button><button>Help</button>
    <div class="child-buttons">
        <button aria-label="Minimize document"><svg viewBox="0 0 12 12"><path d="M2 10h6" stroke="#000" stroke-width="2"/></svg></button>
        <button aria-label="Restore document"><svg viewBox="0 0 12 12"><path d="M1.500 6.500h6v4h-6zM4 6V2h7v5H8M4 2.500h7M2 7h6" fill="none" stroke="#000" stroke-width="1.400"/></svg></button>
        <button aria-label="Close document"><svg viewBox="0 0 12 12"><path d="M2 2l7 8M9 2l-7 8" stroke="#000" stroke-width="2.500"/></svg></button>
    </div>
</nav>

<div class="toolbars">
    <div class="toolbar-row">
        <div class="toolbar tb-standard">
            <button aria-label="New"><svg><use href="#new"/></svg></button>
            <button aria-label="Open"><svg><use href="#open"/></svg></button>
            <button aria-label="Save"><svg><use href="#save"/></svg></button>
            <i class="sep"></i>
            <button aria-label="Print"><svg><use href="#print"/></svg></button>
            <i class="sep"></i>
            <button aria-label="Find"><svg><use href="#binoc"/></svg></button>
            <button aria-label="Replace"><svg><use href="#replace"/></svg></button>
            <i class="sep"></i>
            <button aria-label="Undo"><svg><use href="#undo"/></svg></button>
            <button aria-label="Redo" disabled><svg><use href="#redo"/></svg></button>
            <button class="more" aria-label="More"><svg><use href="#more"/></svg></button>
        </div>
        <div class="toolbar tb-toolbox">
            <button class="active" aria-label="Select"><svg><use href="#pointer"/></svg></button>
            <button aria-label="Entity"><svg><use href="#table"/></svg></button>
            <button aria-label="Subtype"><svg><use href="#subtype"/></svg></button>
            <button aria-label="Identifying relationship"><svg><use href="#rel"/></svg></button>
            <button aria-label="Many-to-many relationship"><svg><use href="#relmany"/></svg></button>
            <button aria-label="Non-identifying relationship"><svg><use href="#reldash"/></svg></button>
            <button aria-label="Annotation"><svg><use href="#textbox"/></svg></button>
            <button aria-label="Connector"><svg><use href="#brace"/></svg></button>
            <button class="more" aria-label="More"><svg><use href="#more"/></svg></button>
        </div>
        <div class="toolbar tb-font">
            <select class="font-name" aria-label="Font"><option>Century Gothic</option></select>
            <select class="font-size" aria-label="Font size"><option>10</option></select>
            <i class="sep"></i>
            <button aria-label="Bold"><svg><use href="#fb"/></svg></button>
            <button aria-label="Italic"><svg><use href="#fi"/></svg></button>
            <button aria-label="Underline"><svg><use href="#fu"/></svg></button>
            <button aria-label="Strikethrough"><svg><use href="#fs"/></svg></button>
            <i class="sep"></i>
            <button class="split" aria-label="Font color"><svg><use href="#fcolor"/></svg><svg class="arrow"><use href="#down"/></svg></button>
            <button class="split" aria-label="Fill color"><svg><use href="#fill"/></svg><svg class="arrow"><use href="#down"/></svg></button>
            <button class="split" aria-label="Line color"><svg><use href="#brush"/></svg><svg class="arrow"><use href="#down"/></svg></button>
            <i class="sep"></i>
            <button class="split" aria-label="Line width"><svg><use href="#weight"/></svg><svg class="arrow"><use href="#down"/></svg></button>
            <button class="split" aria-label="Line style"><svg><use href="#dash"/></svg><svg class="arrow"><use href="#down"/></svg></button>
            <button class="split" aria-label="Arrow style" disabled><svg><use href="#arrows"/></svg><svg class="arrow"><use href="#down"/></svg></button>
            <button class="more" aria-label="More"><svg><use href="#more"/></svg></button>
        </div>
        <div class="toolbar tb-mart">
            <button aria-label="Open from mart" disabled><svg><use href="#d-folder"/></svg></button>
            <button aria-label="Save to mart" disabled><svg><use href="#d-save"/></svg></button>
            <i class="sep"></i>
            <button class="split" aria-label="Lock" disabled><svg><use href="#d-lock"/></svg><svg class="arrow"><use href="#down"/></svg></button>
            <i class="sep"></i>
            <button aria-label="Catalog" disabled><svg><use href="#d-cube"/></svg></button>
            <i class="sep"></i>
            <button aria-label="Merge" disabled><svg><use href="#d-width"/></svg></button>
            <button aria-label="Refresh" disabled><svg><use href="#d-sync"/></svg></button>
            <button aria-label="Review changes" disabled><svg><use href="#d-find"/></svg></button>
            <i class="sep"></i>
            <button aria-label="Supertype identity" disabled><svg><use href="#d-flow"/></svg></button>
            <button aria-label="Supertype rollup" disabled><svg><use href="#d-flow"/></svg></button>
            <button aria-label="Key transform" disabled><svg><use href="#d-key"/></svg></button>
            <button aria-label="Denormalize" disabled><svg><use href="#d-swap"/></svg></button>
            <button class="more" aria-label="More"><svg><use href="#more"/></svg></button>
        </div>
    </div>
    <div class="toolbar-row">
        <div class="toolbar tb-align">
            <button aria-label="Align top"><svg><use href="#a-top"/></svg></button>
            <button aria-label="Align bottom"><svg><use href="#a-bot"/></svg></button>
            <button aria-label="Align middle"><svg><use href="#a-mid"/></svg></button>
            <button aria-label="Align left"><svg><use href="#a-left"/></svg></button>
            <button aria-label="Align right"><svg><use href="#a-right"/></svg></button>
            <button aria-label="Align center"><svg><use href="#a-center"/></svg></button>
            <button class="more" aria-label="More"><svg><use href="#more"/></svg></button>
        </div>
        <div class="toolbar tb-layout">
            <button aria-label="Circular layout" disabled><svg><use href="#l-circle"/></svg></button>
            <button aria-label="Hierarchical layout" disabled><svg><use href="#l-tree"/></svg></button>
            <button aria-label="Symmetric layout" disabled><svg><use href="#l-grid"/></svg></button>
            <button aria-label="Orthogonal layout" disabled><svg><use href="#l-org"/></svg></button>
            <button aria-label="Tree layout" disabled><svg><use href="#l-list"/></svg></button>
            <button aria-label="Redraw relationships"><svg><use href="#redraw"/></svg></button>
            <button aria-label="Redraw entities"><svg><use href="#redraw2"/></svg></button>
            <button class="more" aria-label="More"><svg><use href="#more"/></svg></button>
        </div>
        <div class="toolbar tb-zoom">
            <button aria-label="Zoom out"><svg><use href="#z-out"/></svg></button>
            <button aria-label="Zoom in"><svg><use href="#z-in"/></svg></button>
            <button aria-label="Zoom normal"><svg><use href="#z-norm"/></svg></button>
            <button aria-label="Zoom to fit"><svg><use href="#z-fit"/></svg></button>
            <button aria-label="Zoom selection"><svg><use href="#z-sel"/></svg></button>
            <button class="more" aria-label="More"><svg><use href="#more"/></svg></button>
        </div>
        <div class="toolbar tb-display">
            <button aria-label="Entity level"><svg><use href="#v-ent"/></svg></button>
            <button aria-label="Icon level"><svg><use href="#v-tag"/></svg></button>
            <button aria-label="Attribute level"><svg><use href="#v-attr"/></svg></button>
            <button aria-label="Key level"><svg><use href="#v-key"/></svg></button>
            <button aria-label="Definition level"><svg><use href="#v-def"/></svg></button>
            <i class="sep"></i>
            <button class="split" aria-label="Subject area"><svg><use href="#area"/></svg><svg class="arrow"><use href="#down"/></svg></button>
            <i class="sep"></i>
            <select class="model-view" aria-label="Model view"><option>Logical</option></select>
            <button class="more" aria-label="More"><svg><use href="#more"/></svg></button>
        </div>
        <div class="toolbar tb-database">
            <button aria-label="Forward engineer" disabled><svg><use href="#d-gear"/></svg></button>
            <button aria-label="Reverse engineer"><svg><use href="#gear"/></svg></button>
            <button aria-label="Compare"><svg><use href="#swap"/></svg></button>
            <button aria-label="Database connection" disabled><svg><use href="#d-db"/></svg></button>
            <button aria-label="SQL editor" disabled><svg><use href="#d-sql"/></svg></button>
            <button class="more" aria-label="More"><svg><use href="#more"/></svg></button>
        </div>
        <div class="toolbar tb-shapes">
            <button class="active" aria-label="Rectangle"><svg><use href="#s-rect"/></svg></button>
            <button aria-label="Rounded rectangle"><svg><use href="#s-round"/></svg></button>
            <button aria-label="Ellipse"><svg><use href="#s-oval"/></svg></button>
            <button aria-label="Pentagon"><svg><use href="#s-pent"/></svg></button>
            <button aria-label="Hexagon"><svg><use href="#s-hex"/></svg></button>
            <button aria-label="Octagon"><svg><use href="#s-oct"/></svg></button>
            <button aria-label="Triangle up"><svg><use href="#s-up"/></svg></button>
            <button aria-label="Triangle down"><svg><use href="#s-down"/></svg></button>
            <button aria-label="Triangle left"><svg><use href="#s-left"/></svg></button>
            <button aria-label="Triangle right"><svg><use href="#s-right"/></svg></button>
            <button aria-label="Diamond"><svg><use href="#s-dia"/></svg></button>
            <button aria-label="Parallelogram"><svg><use href="#s-para"/></svg></button>
            <button aria-label="Star"><svg><use href="#s-star"/></svg></button>
            <button aria-label="Cross"><svg><use href="#s-plus"/></svg></button>
            <button aria-label="Freeform"><svg><use href="#brace"/></svg></button>
            <button aria-label="Polyline"><svg><use href="#s-step"/></svg></button>
            <button class="more" aria-label="More"><svg><use href="#more"/></svg></button>
        </div>
        <div class="toolbar tb-hierarchy">
            <button aria-label="Ancestors and descendants" disabled><svg><use href="#h-x"/></svg></button>
            <button aria-label="Descendants" disabled><svg><use href="#h-tree"/></svg></button>
            <button aria-label="Move up" disabled><svg><use href="#h-up"/></svg></button>
            <button aria-label="Move down" disabled><svg><use href="#h-down"/></svg></button>
            <button aria-label="Tile columns"><svg><use href="#h-cols"/></svg></button>
            <button aria-label="Tile rows"><svg><use href="#h-rows"/></svg></button>
            <button aria-label="Expand" disabled><svg><use href="#h-exp"/></svg></button>
            <button aria-label="Collapse" disabled><svg><use href="#h-col"/></svg></button>
            <button aria-label="Locate"><svg><use href="#target"/></svg></button>
            <button class="more" aria-label="More"><svg><use href="#more"/></svg></button>
        </div>
        <div class="toolbar tb-connect">
            <button aria-label="Connect"><svg><use href="#mart"/></svg></button>
            <button aria-label="Disconnect" disabled><svg><use href="#d-mart"/></svg></button>
            <i class="sep"></i>
            <button aria-label="Publish" disabled><svg><use href="#d-up"/></svg></button>
            <i class="sep"></i>
            <button aria-label="Web portal" disabled><svg><use href="#d-globe"/></svg></button>
            <button class="more" aria-label="More"><svg><use href="#more"/></svg></button>
        </div>
    </div>
</div>

<main class="workspace">
    <section class="panel explorer">
        <header class="panel-title"><h2>Model Explorer</h2>
            <button aria-label="Auto hide"><svg><use href="#pin"/></svg></button>
            <button aria-label="Close"><svg><use href="#close"/></svg></button>
        </header>
        <div class="panel-body">
            <div class="panel-tools">
                <button aria-label="Back" disabled><svg><use href="#p-prev"/></svg></button>
                <button aria-label="Forward" disabled><svg><use href="#p-next"/></svg></button>
                <i></i>
                <button aria-label="Properties" disabled><svg><use href="#d-find"/></svg></button>
                <button aria-label="Delete" disabled><svg><use href="#p-del"/></svg></button>
                <i></i>
                <button aria-label="Find"><svg><use href="#binoc"/></svg></button>
                <i></i>
                <button aria-label="Help"><svg><use href="#help"/></svg></button>
            </div>
            <div class="list-frame">
                <ul class="tree">
                    <li class="root"><div class="node"><span class="slot"><button aria-label="Collapse">−</button></span><svg><use href="#t-doc"/></svg><span class="label">Model2019</span></div>
                        <ul>
                            <li><div class="node"><span class="slot"></span><svg><use href="#t-text"/></svg><span class="label">Annotations</span></div></li>
                            <li><div class="node"><span class="slot"></span><svg><use href="#t-std"/></svg><span class="label">Datatype Standards</span></div></li>
                            <li><div class="node"><span class="slot"></span><svg><use href="#t-def"/></svg><span class="label">Default Values</span></div></li>
                            <li><div class="node"><span class="slot"><button aria-label="Expand">+</button></span><svg><use href="#t-dom"/></svg><span class="label">Domains</span></div></li>
                            <li><div class="node"><span class="slot"><button aria-label="Collapse">−</button></span><svg><use href="#t-ents"/></svg><span class="label">Entities</span></div>
                                <ul>
                                    <li><div class="node"><span class="slot"><button aria-label="Collapse">−</button></span><svg><use href="#t-ent"/></svg><span class="label">Categories</span></div>
                                        <ul>
                                            <li><div class="node"><span class="slot"><button aria-label="Expand">+</button></span><svg><use href="#t-attr"/></svg><span class="label">Attributes</span></div></li>
                                            <li><div class="node"><span class="slot"></span><svg><use href="#t-rel"/></svg><span class="label">Child Relations</span></div></li>
                                            <li><div class="node"><span class="slot"><button aria-label="Collapse">−</button></span><svg><use href="#t-keys"/></svg><span class="label selected">Key Groups</span></div>
                                                <ul>
                                                    <li><div class="node"><span class="slot"><button aria-label="Expand">+</button></span><svg><use href="#t-key"/></svg><span class="label">XPKCategories</span></div></li>
                                                </ul>
                                            </li>
                                            <li><div class="node"><span class="slot"><button aria-label="Expand">+</button></span><svg><use href="#t-rel"/></svg><span class="label">Parent Relations</span></div></li>
                                        </ul>
                                    </li>
                                    <li><div class="node"><span class="slot"><button aria-label="Expand">+</button></span><svg><use href="#t-ent"/></svg><span class="label">ProductDetails</span></div></li>
                                </ul>
                            </li>
                            <li><div class="node"><span class="slot"><button aria-label="Expand">+</button></span><svg><use href="#t-er"/></svg><span class="label">ER Diagrams</span></div></li>
                            <li><div class="node"><span class="slot"></span><svg><use href="#t-src"/></svg><span class="label">Model Sources</span></div></li>
                            <li><div class="node"><span class="slot"></span><svg><use href="#t-std"/></svg><span class="label">Naming Standards</span></div></li>
                            <li><div class="node"><span class="slot"><button aria-label="Expand">+</button></span><svg><use href="#t-rel"/></svg><span class="label">Relationships</span></div></li>
                            <li><div class="node"><span class="slot"></span><svg><use href="#t-area"/></svg><span class="label">Subject Areas</span></div></li>
                            <li><div class="node"><span class="slot"><button aria-label="Expand">+</button></span><svg><use href="#t-theme"/></svg><span class="label">Themes</span></div></li>
                            <li><div class="node"><span class="slot"></span><svg><use href="#t-val"/></svg><span class="label">Validation Rules</span></div></li>
                        </ul>
                    </li>
                </ul>
            </div>
            <div class="tabs">
                <button class="current"><svg><use href="#t-doc"/></svg>Model</button>
                <button><svg><use href="#area"/></svg>Subject Area</button>
            </div>
        </div>
    </section>

    <section class="editor">
        <div class="canvas-row">
            <div class="canvas">
                <div class="paper"></div>
                <div class="subject">
                    <div class="entity product">
                        <h3>ProductDetails</h3>
                        <div class="box">
                            <p class="pk">ProductID: CHAR(18)</p>
                            <div class="attrs"><p>ProductName: CHAR(18)</p><p class="fk">CategoriesID: CHAR(18) (FK)</p></div>
                        </div>
                    </div>
                    <div class="entity category picked">
                        <h3>Categories</h3>
                        <div class="box">
                            <p class="pk">CategoriesID: CHAR(18)</p>
                            <div class="attrs"><p>CategoriesName: CHAR(18)</p></div>
                        </div>
                    </div>
                    <svg class="link" viewBox="0 0 56 14"><path d="M8 7h9M22 7h15M40 7h5" stroke="#00003c" stroke-width="1.400"/><circle cx="5" cy="7" r="5" fill="#00003c"/><path d="M50 2l5 5-5 5-5-5z" fill="#cfcff4" stroke="#00003c"/></svg>
                    <svg class="handles" viewBox="0 0 194 82"><path d="M0 0h5v5H0zM94 0h5v5h-5zM188 0h5v5h-5zM0 38h5v5H0zM0 76h5v5H0z" fill="#0a96ff"/></svg>
                </div>
                <menu class="context-menu">
                    <li><button class="hover">Entity Properties...</button></li>
                    <li><button>Attribute Properties...</button></li>
                    <li><button>Key Group Properties...</button></li>
                    <li class="rule"></li>
                    <li><button>Delete</button></li>
                    <li><button>Go To Model Explorer</button></li>
                    <li class="rule"></li>
                    <li><button>Display Level<svg viewBox="0 0 8 10"><path d="M2 1l4 4-4 4" fill="none" stroke="#333" stroke-width="1.200"/></svg></button></li>
                    <li><button>Override Fonts and Colors...</button></li>
                    <li><button>Reset Object to Automatic Sizing</button></li>
                    <li class="rule"></li>
                    <li><button>Copy Theme and Overridden Styles</button></li>
                    <li><button disabled>Paste Theme and Overridden Styles</button></li>
                </menu>
            </div>
            <div class="scroll vertical full">
                <button aria-label="Scroll up"><svg viewBox="0 0 12 12"><path d="M2 8l4-4 4 4" fill="none" stroke="#505050" stroke-width="2"/></svg></button>
                <span class="thumb"></span>
                <button aria-label="Scroll down"><svg viewBox="0 0 12 12"><path d="M2 4l4 4 4-4" fill="none" stroke="#505050" stroke-width="2"/></svg></button>
            </div>
        </div>
        <div class="scroll horizontal full">
            <button aria-label="Scroll left"><svg viewBox="0 0 12 12"><path d="M8 2L4 6l4 4" fill="none" stroke="#505050" stroke-width="2"/></svg></button>
            <span class="thumb"></span>
            <button aria-label="Scroll right"><svg viewBox="0 0 12 12"><path d="M4 2l4 4-4 4" fill="none" stroke="#505050" stroke-width="2"/></svg></button>
        </div>
        <div class="sheet-tabs">
            <svg viewBox="0 0 12 23"><path d="M0 0h12v23h-1z" fill="#fff"/><path d="M0 0l11 23" stroke="#000"/></svg>
            <button>ER_Diagram_163</button>
            <svg viewBox="0 0 12 23"><path d="M0 0h12L1 23H0z" fill="#fff"/><path d="M12 0L1 23" stroke="#000"/></svg>
        </div>
    </section>
</main>

<div class="dock">
    <section class="panel action-log">
        <header class="panel-title"><h2>Action Log</h2>
            <button aria-label="Auto hide"><svg><use href="#pin"/></svg></button>
            <button aria-label="Close"><svg><use href="#close"/></svg></button>
        </header>
        <div class="panel-body">
            <div class="panel-tools">
                <button aria-label="Transactions" disabled><svg><use href="#d-log"/></svg></button>
                <i></i>
                <button aria-label="Find"><svg><use href="#binoc"/></svg></button>
                <button aria-label="Find next" disabled><svg><use href="#d-next"/></svg></button>
                <i></i>
                <button aria-label="Comment" disabled><svg><use href="#p-card"/></svg></button>
                <i></i>
                <button aria-label="Properties" disabled><svg><use href="#d-find"/></svg></button>
                <i></i>
                <button aria-label="Undo to here"><svg><use href="#undo2"/></svg></button>
                <button aria-label="Redo to here" disabled><svg><use href="#redo2"/></svg></button>
                <i></i>
                <button aria-label="Filter"><svg><use href="#filter"/></svg></button>
                <i></i>
                <button aria-label="Help"><svg><use href="#help"/></svg></button>
            </div>
            <div class="list-frame">
                <ul class="tree">
                    <li><div class="node"><span class="slot"><button aria-label="Expand">+</button></span><svg><use href="#t-log"/></svg><span class="label selected">Set Object Location</span></div></li>
                    <li><div class="node"><span class="slot"><button aria-label="Expand">+</button></span><svg><use href="#t-log"/></svg><span class="label">Add members to ER Diagram 'ER_Diagram_163'</span></div></li>
                    <li><div class="node"><span class="slot"><button aria-label="Expand">+</button></span><svg><use href="#t-log"/></svg><span class="label">Remove members from ER Diagram 'ER_Diagram_163'</span></div></li>
                    <li><div class="node"><span class="slot"><button aria-label="Expand">+</button></span><svg><use href="#t-log"/></svg><span class="label">Set ER Diagram property Display Entity Icon</span></div></li>
                    <li><div class="node"><span class="slot"><button aria-label="Expand">+</button></span><svg><use href="#t-log"/></svg><span class="label">Set ER Diagram property Display Attribute Icon</span></div></li>
                    <li><div class="node"><span class="slot"><button aria-label="Expand">+</button></span><svg><use href="#t-log"/></svg><span class="label">Set Object Location</span></div></li>
                    <li><div class="node"><span class="slot"><button aria-label="Expand">+</button></span><svg><use href="#t-log"/></svg><span class="label">Set Object Location</span></div></li>
                    <li><div class="node"><span class="slot"><button aria-label="Expand">+</button></span><svg><use href="#t-log"/></svg><span class="label">Set Object Location</span></div></li>
                    <li><div class="node"><span class="slot"><button aria-label="Expand">+</button></span><svg><use href="#t-log"/></svg><span class="label">Set ER Diagram property Display Logical Alternate Key (AK) Designator</span></div></li>
                    <li><div class="node"><span class="slot"><button aria-label="Expand">+</button></span><svg><use href="#t-log"/></svg><span class="label">Set ER Diagram property Display Logical Alternate Key (AK) Designator</span></div></li>
                    <li><div class="node"><span class="slot"><button aria-label="Expand">+</button></span><svg><use href="#t-log"/></svg><span class="label">Set ER Diagram property Display Attribute Icon</span></div></li>
                    <li><div class="node"><span class="slot"><button aria-label="Expand">+</button></span><svg><use href="#t-log"/></svg><span class="label">Set ER Diagram property Display Entity Icon</span></div></li>
                    <li><div class="node"><span class="slot"><button aria-label="Expand">+</button></span><svg><use href="#t-log"/></svg><span class="label">Set ER Diagram property Display Attribute Data Type</span></div></li>
                    <li><div class="node"><span class="slot"><button aria-label="Expand">+</button></span><svg><use href="#t-log"/></svg><span class="label">Set ER Diagram property Show Attributes/Columns as Grid</span></div></li>
                    <li><div class="node"><span class="slot"><button aria-label="Expand">+</button></span><svg><use href="#t-log"/></svg><span class="label">Set ER Diagram property Display Rolenames</span></div></li>
                    <li><div class="node"><span class="slot"><button aria-label="Expand">+</button></span><svg><use href="#t-log"/></svg><span class="label">Set ER Diagram property Display Attribute Data Type</span></div></li>
                </ul>
                <div class="scroll vertical">
                    <button aria-label="Scroll up"><svg viewBox="0 0 12 12"><path d="M2 8l4-4 4 4" fill="none" stroke="#505050" stroke-width="2"/></svg></button>
                    <span class="thumb"></span>
                    <button aria-label="Scroll down"><svg viewBox="0 0 12 12"><path d="M2 4l4 4 4-4" fill="none" stroke="#505050" stroke-width="2"/></svg></button>
                </div>
            </div>
            <div class="tabs">
                <button class="current"><svg><use href="#t-log"/></svg>Details</button>
                <button><svg><use href="#t-sum"/></svg>Summary</button>
            </div>
        </div>
    </section>

    <section class="panel advisories">
        <header class="panel-title"><h2>Advisories</h2>
            <button aria-label="Auto hide"><svg><use href="#pin"/></svg></button>
            <button aria-label="Close"><svg><use href="#close"/></svg></button>
        </header>
        <div class="panel-body">
            <div class="panel-tools">
                <button aria-label="Save"><svg><use href="#save"/></svg></button>
                <button aria-label="Details"><svg><use href="#details"/></svg></button>
                <button aria-label="Help"><svg><use href="#help"/></svg></button>
            </div>
            <ul class="messages">
                <li><svg><use href="#t-ok"/></svg><span class="label selected">Set Object Location</span></li>
            </ul>
        </div>
    </section>

    <section class="panel overview">
        <header class="panel-title"><h2>Overview</h2>
            <button aria-label="Auto hide"><svg><use href="#pin"/></svg></button>
            <button aria-label="Close"><svg><use href="#close"/></svg></button>
        </header>
        <div class="panel-body map">
            <div class="paper"></div>
            <div class="subject">
                <div class="entity product">
                    <h3>ProductDetails</h3>
                    <div class="box">
                        <p class="pk">ProductID: CHAR(18)</p>
                        <div class="attrs"><p>ProductName: CHAR(18)</p><p class="fk">CategoriesID: CHAR(18) (FK)</p></div>
                    </div>
                </div>
                <div class="entity category">
                    <h3>Categories</h3>
                    <div class="box">
                        <p class="pk">CategoriesID: CHAR(18)</p>
                        <div class="attrs"><p>CategoriesName: CHAR(18)</p></div>
                    </div>
                </div>
                <svg class="link" viewBox="0 0 56 14"><path d="M8 7h9M22 7h15M40 7h5" stroke="#00003c" stroke-width="1.400"/><circle cx="5" cy="7" r="5" fill="#00003c"/><path d="M50 2l5 5-5 5-5-5z" fill="#cfcff4" stroke="#00003c"/></svg>
            </div>
            <span class="page-line"></span>
            <span class="viewport"></span>
            <span class="viewport-grip"></span>
        </div>
    </section>
</div>

<footer class="status-bar">
    <span class="hint">For Help, press F1</span>
    <span class="mart-state"><svg><use href="#nomart"/></svg>Non-Mart Model</span>
    <span class="spare"></span>
    <span class="target-db">SQL Server 2016/2017</span>
    <label class="zoom-value" for="zoom">100%</label>
    <div class="zoom">
        <button aria-label="Zoom out"><svg viewBox="0 0 16 16"><circle cx="8" cy="8" r="7.500" fill="#fff" stroke="#888"/><path d="M4 8h8" stroke="#000" stroke-width="2"/></svg></button>
        <input type="range" id="zoom" min="0" max="200" value="100">
        <button aria-label="Zoom in"><svg viewBox="0 0 16 16"><circle cx="8" cy="8" r="7.500" fill="#fff" stroke="#888"/><path d="M4 8h8M8 4v8" stroke="#000" stroke-width="2"/></svg></button>
    </div>
</footer>
</body>
</html>
```
FILE: styles.css
```css
* {
    box-sizing: border-box;
}
body {
    margin: 0;
    height: 100vh;
    display: flex;
    flex-direction: column;
    overflow: hidden;
    background-color: #f0f0f0;
    color: #000;
    font-family: "Open Sans", "Noto Sans", sans-serif;
    font-size: 14px;
    border-bottom: 2px solid #3c3c3c;
}
button, select {
    font: inherit;
    color: inherit;
    border: none;
    background: none;
    padding: 0;
}
h1, h2, h3, p, ul, menu {
    margin: 0;
    padding: 0;
    font-size: inherit;
    font-weight: normal;
    list-style: none;
}
.sprite {
    width: 0;
    height: 0;
    flex: none;
}

/* title and menu */
.title-bar {
    display: flex;
    align-items: center;
    height: 29px;
    padding-left: 2px;
    background-color: #fff;
}
.logo {
    width: 20px;
    height: 20px;
    margin-right: 5px;
}
.window-buttons {
    display: flex;
    margin-left: auto;
    padding-right: 3px;
}
.window-buttons button {
    width: 58px;
    height: 29px;
}
.window-buttons svg {
    width: 14px;
    height: 14px;
    display: block;
    margin: auto;
}
.menu-bar {
    display: flex;
    align-items: center;
    height: 30px;
    padding-left: 3px;
    background: linear-gradient(90deg, #f0f0f0, #fbfbfb 80%);
}
.menu-bar > button {
    padding: 0 9px;
}
.child-buttons {
    display: flex;
    gap: 4px;
    margin-left: auto;
    padding-right: 4px;
}
.child-buttons svg {
    width: 12px;
    height: 12px;
    display: block;
}

/* toolbars */
.toolbars {
    padding-bottom: 1px;
    background: linear-gradient(90deg, #f0f0f0, #fbfbfb 80%);
    border-bottom: 1px solid #a0a0a0;
}
.toolbar-row {
    display: flex;
    height: 26px;
    padding-left: 3px;
    margin-bottom: 1px;
}
.toolbar-row:last-child {
    margin-bottom: 0;
}
.toolbar {
    display: flex;
    flex: none;
    align-items: center;
    border-radius: 3px;
    background: linear-gradient(#fff, #f0f0f0);
}
.toolbar::before {
    content: "";
    width: 2px;
    height: 14px;
    margin: 0 2px;
    background: repeating-linear-gradient(#b4b4b4 0 2px, transparent 2px 4px);
}
.toolbar button {
    width: 22px;
    height: 22px;
    display: flex;
    align-items: center;
    justify-content: center;
}
.toolbar svg {
    flex: none;
    width: 20px;
    height: 20px;
}
.toolbar .active {
    border: 1px solid #0078d7;
    background-color: #e4f0fb;
}
.toolbar .split {
    width: 33px;
}
.toolbar .split .arrow {
    width: 9px;
    height: 9px;
    margin-left: 2px;
}
.toolbar .split[disabled] .arrow {
    fill: #999;
}
.toolbar .more {
    width: 11px;
    height: 26px;
    margin-left: 2px;
    background: linear-gradient(#f0f0f0, #a6a6a6);
}
.toolbar .more svg {
    width: 11px;
    height: 26px;
}
.sep {
    width: 1px;
    height: 14px;
    margin: 0 3px 0 2px;
    background-color: #bdbdbd;
}
.tb-font .sep, .tb-display .sep {
    margin: 0 4px 0 3px;
}
.toolbar select {
    appearance: none;
    height: 21px;
    padding-left: 3px;
    font-size: 12px;
    background: #fff url("data:image/svg+xml,%3Csvg xmlns='http://www.w3.org/2000/svg' viewBox='0 0 8 4'%3E%3Cpath d='M0 0h8L4 4z'/%3E%3C/svg%3E") right 2px center / 8px 4px no-repeat;
}
.font-name { width: 142px; }
.font-size { width: 43px; margin-left: 3px; }
.model-view { width: 99px; }
.tb-toolbox { margin-left: 4px; }
.tb-font { margin-left: 67px; }
.tb-mart { margin-left: 10px; }
.tb-layout { margin-left: 20px; }
.tb-zoom { margin-left: 19px; }
.tb-display { margin-left: 7px; }
.tb-database { margin-left: 35px; }
.tb-shapes { margin-left: 13px; }
.tb-hierarchy { margin-left: 12px; }
.tb-connect { margin-left: 17px; }

/* panels */
.panel {
    display: flex;
    flex-direction: column;
    min-width: 0;
    min-height: 0;
}
.panel-title {
    display: flex;
    align-items: center;
    flex: none;
    height: 25px;
    padding: 0 2px 0 4px;
    background: linear-gradient(90deg, #bdcad8, #d8e6f3 80%);
}
.panel-title h2 {
    flex: 1;
}
.panel-title button {
    width: 15px;
    height: 15px;
}
.panel-title svg {
    width: 11px;
    height: 11px;
    display: block;
    margin: auto;
}
.panel-body {
    flex: 1;
    min-height: 0;
    display: flex;
    flex-direction: column;
    border: 1px solid #a0a0a0;
}
.panel-tools {
    display: flex;
    align-items: center;
    flex: none;
    height: 28px;
    padding-left: 2px;
}
.panel-tools button {
    width: 23px;
    height: 18px;
    display: flex;
}
.panel-tools svg {
    width: 18px;
    height: 18px;
}
.panel-tools i {
    width: 1px;
    height: 18px;
    margin: 0 5px 0 0;
    background-color: #909090;
}
.list-frame {
    flex: 1;
    min-height: 0;
    display: flex;
    margin-right: 1px;
    padding: 3px;
    border: 1px solid #dcdcdc;
    background-color: #fff;
    font-family: "Liberation Sans", Arial, sans-serif;
    font-size: 13px;
}
.tree {
    flex: 1;
    overflow: hidden;
    border: 1px solid #828790;
}
.tree ul {
    margin-left: 20px;
}
.tree li {
    background: repeating-linear-gradient(#a0a0a0 0 1px, transparent 1px 2px) 8px 0 / 1px 100% no-repeat;
}
.tree ul li:last-child {
    background-size: 1px 9px;
}
.tree .root {
    background: none;
}
.node {
    display: flex;
    align-items: center;
    height: 18px;
}
.slot {
    display: flex;
    align-items: center;
    width: 18px;
    height: 18px;
    padding-left: 4px;
    background: repeating-linear-gradient(90deg, #a0a0a0 0 1px, transparent 1px 2px) 8px 9px / 10px 1px no-repeat;
}
.slot button {
    width: 9px;
    height: 9px;
    border: 1px solid #969696;
    border-radius: 1px;
    background-color: #fff;
    color: #2c4a9a;
    font-size: 10px;
    line-height: 7px;
}
.node svg {
    width: 16px;
    height: 16px;
    margin: 0 3px 0 2px;
}
.label {
    padding: 0 3px;
    line-height: 18px;
    white-space: nowrap;
}
.selected {
    background-color: #e0e0e0;
}
.tabs {
    display: flex;
    align-items: flex-start;
    flex: none;
    height: 24px;
    font-size: 13px;
}
.tabs button {
    display: flex;
    align-items: center;
    gap: 5px;
    height: 22px;
    padding: 0 8px 0 3px;
    border: 1px solid #dcdcdc;
    border-width: 0 1px 1px 0;
}
.tabs .current {
    height: 24px;
    padding-left: 5px;
    border: none;
    background-color: #d8e8f8;
}
.tabs svg {
    width: 16px;
    height: 16px;
}

/* workspace */
.workspace {
    flex: 559;
    min-height: 0;
    display: flex;
    gap: 4px;
}
.explorer {
    flex: none;
    width: 326px;
}
.explorer .panel-title {
    height: 24px;
}
.explorer .panel-tools {
    height: 29px;
    padding-bottom: 3px;
}
.explorer .tabs {
    height: 26px;
}
.editor {
    flex: 1;
    min-width: 0;
    display: flex;
    flex-direction: column;
    border-left: 1px solid #a0a0a0;
    padding: 1px 2px 0 0;
}
.canvas-row {
    flex: 1;
    min-height: 0;
    display: flex;
}
.canvas {
    flex: 1;
    position: relative;
    background-color: #d2d2d2;
}
.canvas .paper {
    position: absolute;
    left: 0;
    top: 32px;
    bottom: 0;
    width: 788px;
    background-color: #fff;
    border: solid #333;
    border-width: 1px 1px 0 0;
}
.scroll {
    display: flex;
    flex: none;
    background-color: #f0f0f0;
}
.scroll button {
    width: 21px;
    height: 21px;
    flex: none;
}
.scroll svg {
    width: 12px;
    height: 12px;
    display: block;
    margin: auto;
}
.thumb {
    background-color: #cdcdcd;
}
.vertical {
    flex-direction: column;
}
.full .thumb {
    flex: 1;
}
.horizontal {
    margin-right: 21px;
}
.sheet-tabs {
    display: flex;
    height: 29px;
    flex: none;
    padding-left: 7px;
    border-top: 1px solid #a0a0a0;
}
.sheet-tabs button {
    height: 23px;
    background-color: #fff;
    border-bottom: 1px solid #888;
}
.sheet-tabs svg {
    width: 12px;
    height: 23px;
}

/* diagram objects */
.subject {
    position: absolute;
    width: 480px;
    height: 161px;
    border: 1px solid #000;
    background-color: #b3b1ee;
    font-family: Lato, sans-serif;
    font-size: 14px;
}
.canvas .subject {
    left: 21px;
    top: 90px;
}
.entity {
    position: absolute;
}
.entity h3 {
    height: 18px;
    padding-left: 1px;
    line-height: 18px;
    color: #222;
}
.product { left: 14px; top: 40px; }
.category { left: 259px; top: 42px; }
.category h3 { height: 19px; }
.picked h3 { background-color: #a5a3d6; }
.box {
    border: 1px solid #000;
    background-color: #fff;
    box-shadow: 5px 5px 0 #8583b4;
    line-height: 16px;
    white-space: nowrap;
}
.product .box { width: 190px; }
.category .box {
    width: 182px;
    background-color: #e36c0a;
}
.box p {
    padding-left: 6px;
}
.box .pk {
    padding: 5px 0 4px 6px;
    font-weight: bold;
    border-bottom: 1px solid #000;
}
.category .pk { color: #33427e; }
.attrs { padding: 4px 0; }
.fk { color: #0b4bc0; }
.link {
    position: absolute;
    left: 203px;
    top: 79px;
    width: 56px;
    height: 14px;
}
.handles {
    position: absolute;
    left: 253px;
    top: 36px;
    width: 194px;
    height: 82px;
}

/* context menu */
.context-menu {
    position: absolute;
    left: 355px;
    top: 161px;
    width: 328px;
    padding: 2px;
    border: 1px solid #ccc;
    background-color: #f2f2f2;
    box-shadow: 4px 4px 3px rgba(0, 0, 0, 0.5);
}
.context-menu button {
    display: flex;
    align-items: center;
    justify-content: space-between;
    width: 100%;
    height: 24px;
    padding: 0 10px 0 34px;
}
.context-menu .hover { background-color: #91c9f7; }
.context-menu button:disabled { color: #6d6d6d; }
.context-menu svg {
    width: 8px;
    height: 10px;
}
.rule {
    height: 1px;
    margin: 3px 0 3px 30px;
    background-color: #d4d4d4;
}

/* bottom dock */
.dock {
    flex: 381;
    min-height: 0;
    display: grid;
    grid-template-columns: 769fr 480fr 663fr;
    gap: 4px;
    padding-top: 2px;
}
.action-log .panel-tools { height: 30px; align-items: flex-start; padding-top: 2px; }
.action-log .tree { font-size: 14px; font-weight: bold; border-right: none; }
.action-log .scroll {
    border: 1px solid #828790;
    border-left: none;
}
.action-log .scroll button { width: 19px; }
.action-log .thumb { height: 54px; }
.action-log .scroll button:last-child { margin-top: auto; }
.advisories .panel-tools svg { width: 16px; height: 16px; }
.advisories .panel-tools { padding-left: 3px; }
.messages {
    flex: 1;
    border-top: 1px solid #828790;
    background-color: #fff;
    font-family: "Liberation Sans", Arial, sans-serif;
    font-size: 13px;
}
.messages li {
    display: flex;
    align-items: center;
    gap: 3px;
    padding-left: 1px;
}
.messages svg {
    width: 16px;
    height: 16px;
}
.map {
    position: relative;
    overflow: hidden;
    background-color: #d2d2d2;
}
.map .paper {
    position: absolute;
    inset: 36px 0 0;
    border-top: 2px solid #444;
    background-color: #fff;
}
.map .subject { left: 91px; top: 96px; }
.page-line {
    position: absolute;
    left: 95px;
    top: 0;
    bottom: 0;
    width: 1px;
    background-color: #444;
}
.viewport {
    position: absolute;
    left: 71px;
    top: 5px;
    right: 0;
    bottom: 0;
    border: solid #0a96ff;
    border-width: 3px 0 0 3px;
}
.viewport-grip {
    position: absolute;
    left: 66px;
    top: 0;
    width: 5px;
    height: 5px;
    background-color: #0a96ff;
}

/* status bar */
.status-bar {
    display: flex;
    align-items: stretch;
    flex: none;
    height: 22px;
    line-height: 23px;
    border-top: 1px solid #d4d4d4;
}
.status-bar > span, .zoom-value {
    padding: 0 5px;
    border-right: 1px solid #d0d0d0;
}
.status-bar .hint {
    flex: 1;
    padding-left: 3px;
    border: none;
}
.status-bar .mart-state {
    display: flex;
    align-items: center;
    gap: 3px;
    width: 143px;
}
.mart-state svg {
    width: 15px;
    height: 15px;
}
.spare { width: 124px; }
.target-db { width: 234px; }
.zoom-value { width: 43px; }
.zoom {
    display: flex;
    align-items: center;
    width: 132px;
    padding-left: 2px;
}
.zoom button {
    width: 16px;
    height: 16px;
    flex: none;
}
.zoom button svg {
    width: 16px;
    height: 16px;
    display: block;
}
.zoom input {
    appearance: none;
    flex: 1;
    min-width: 0;
    height: 16px;
    margin: 0;
    background: linear-gradient(#999, #999) center / 100% 1px no-repeat;
}
.zoom input::-webkit-slider-thumb {
    appearance: none;
    width: 9px;
    height: 14px;
    border: 1px solid #888;
    border-radius: 1px 1px 4px 4px;
    background-color: #fff;
}
```
